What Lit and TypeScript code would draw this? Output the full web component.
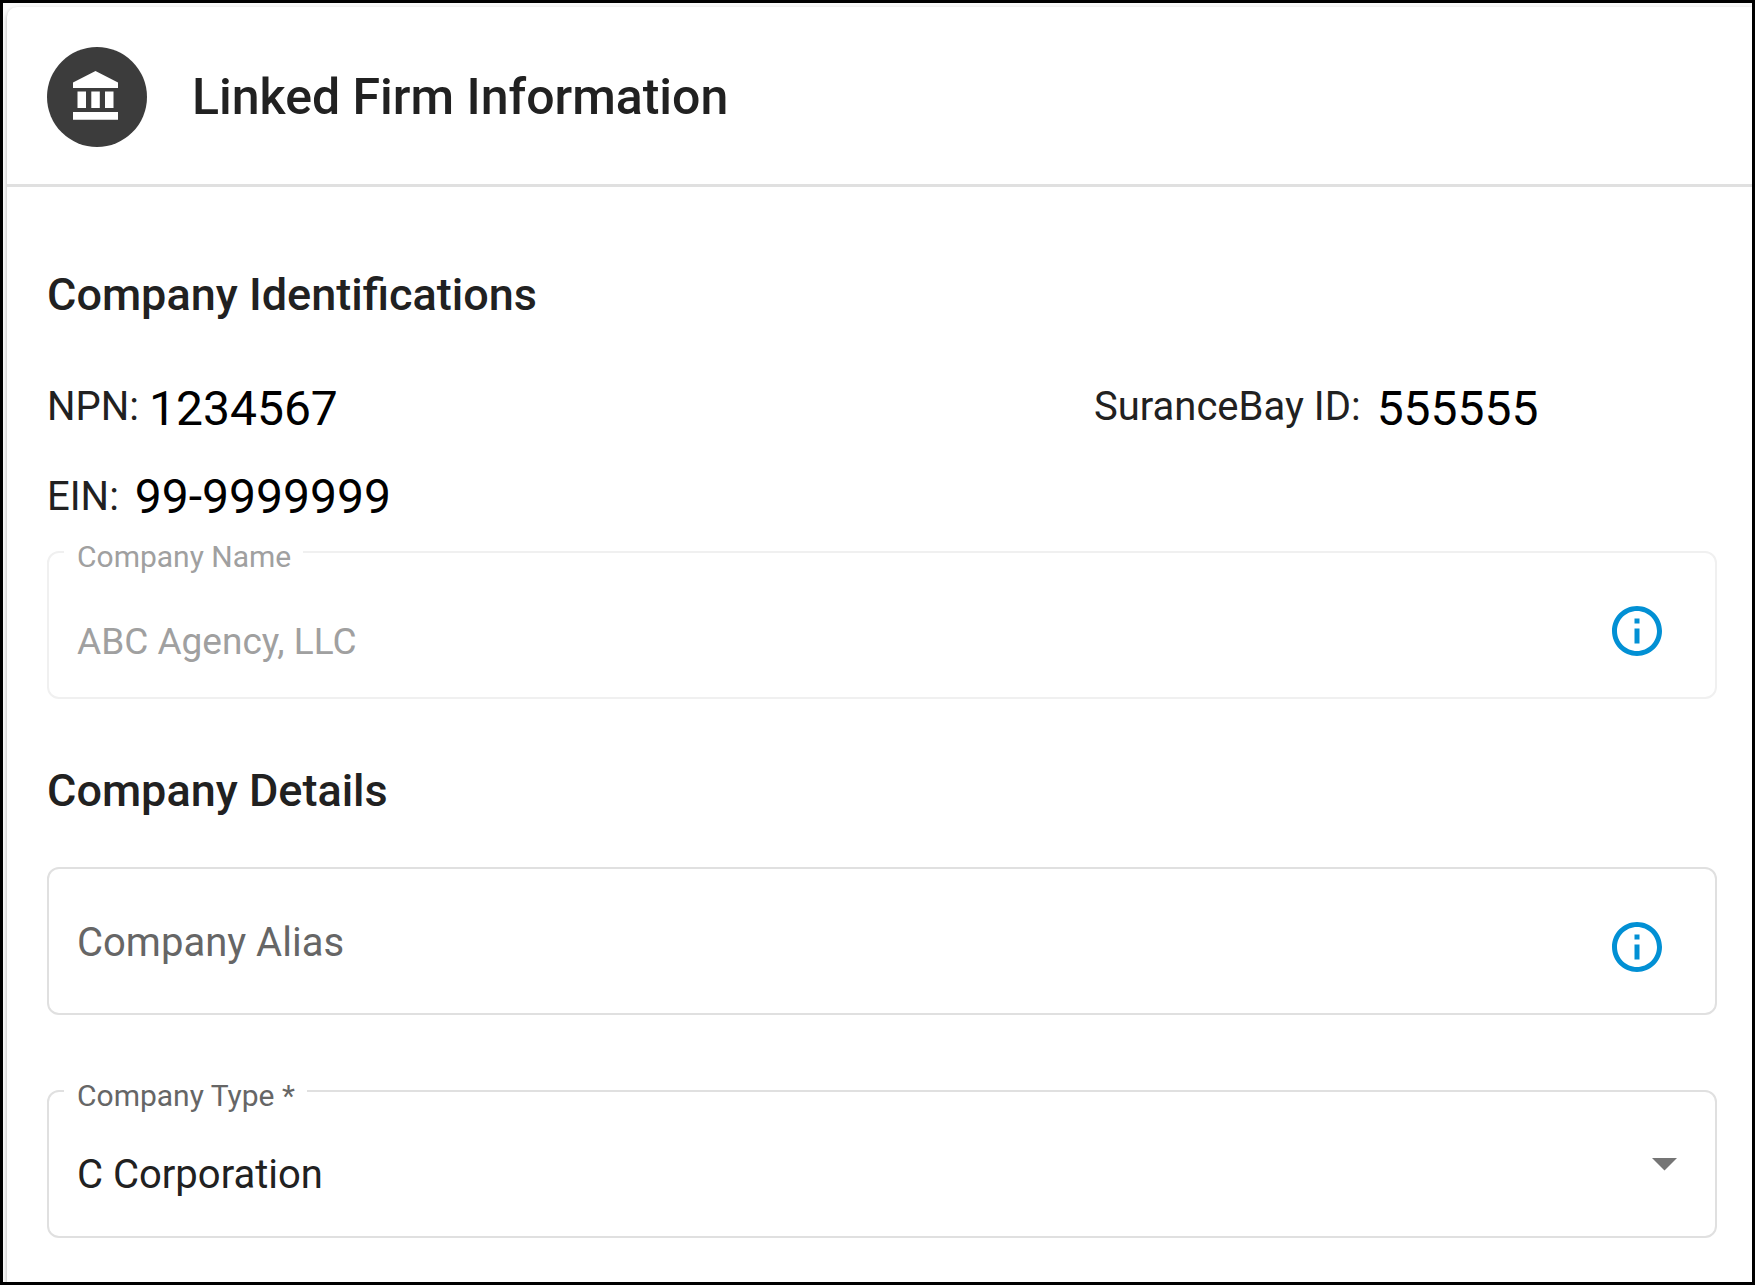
import { LitElement, html, css } from "lit";
import { customElement, property } from "lit/decorators.js";

@customElement("info-button")
class InfoButton extends LitElement {
  @property() topic = "";

  static styles = css`
    :host {
      display: flex;
    }
    .button {
      display: flex;
      padding: 0;
      border: 0;
      background: none;
      color: #0290d4;
      cursor: pointer;
    }
    .icon {
      display: block;
      width: 60px;
      height: 60px;
      fill: currentColor;
    }
  `;

  render() {
    return html`
      <button class="button" type="button" aria-label="About ${this.topic}">
        <svg class="icon" viewBox="0 0 24 24" aria-hidden="true">
          <path
            d="M11 7h2v2h-2zm0 4h2v6h-2zm1-9C6.48 2 2 6.48 2 12s4.480 10 10 10 10-4.480 10-10S17.520 2 12 2zm0 18c-4.410 0-8-3.590-8-8s3.590-8 8-8 8 3.590 8 8-3.590 8-8 8z"
          />
        </svg>
      </button>
    `;
  }
}

@customElement("app-root")
class AppRoot extends LitElement {
  static styles = css`
    :host {
      display: block;
      font-family: Roboto, "Liberation Sans", sans-serif;
      color: #212121;
    }
    * {
      box-sizing: border-box;
    }
    .page {
      display: flex;
      min-height: 100vh;
      padding: 4px 0 0 4px;
      border: 3px solid #000;
      background: #fafafa;
      overflow: hidden;
    }
    .card {
      flex: 1;
      min-width: 0;
      border-top-left-radius: 10px;
      background: #fff;
      box-shadow: 0 2px 4px rgba(0, 0, 0, 0.3);
    }
    .header {
      display: flex;
      align-items: center;
      gap: 45px;
      padding: 40px 40px 37px;
      border-bottom: 3px solid #e0e0e0;
    }
    .avatar {
      display: block;
      flex: none;
      width: 100px;
      height: 100px;
    }
    .title {
      margin: 0;
      font-size: 50px;
      font-weight: 500;
      line-height: 60px;
    }
    .body {
      padding: 80px 35px 40px 40px;
    }
    .heading {
      margin: 0;
      font-size: 45px;
      font-weight: 500;
      line-height: 56px;
    }
    .ids {
      display: grid;
      grid-template-columns: 1047fr 623fr;
      row-gap: 32px;
      margin: 56px 0 26px;
    }
    .id {
      display: flex;
      align-items: flex-start;
      gap: 10px;
    }
    .wide {
      gap: 16px;
    }
    .term {
      font-size: 40px;
      line-height: 56px;
    }
    .value {
      margin: 0;
      padding-top: 2px;
      font-size: 48px;
      line-height: 56px;
      color: #000;
    }
    .level .value {
      padding-top: 0;
    }
    .field {
      position: relative;
      display: flex;
      align-items: center;
      height: 148px;
      border: 2px solid #e0e0e0;
      border-radius: 12px;
    }
    .field.disabled {
      border-color: #f0f0f0;
    }
    .label {
      position: absolute;
      top: -14px;
      left: 15px;
      padding: 0 12px 0 13px;
      background: #fff;
      font-size: 30px;
      line-height: 36px;
      color: #666;
    }
    .disabled .label {
      color: #a0a0a0;
    }
    .label.resting {
      top: 46px;
      background: none;
      font-size: 40px;
      line-height: 56px;
      pointer-events: none;
    }
    .control {
      flex: 1;
      min-width: 0;
      align-self: stretch;
      margin: 0;
      padding: 20px 28px 0;
      border: 0;
      outline: 0;
      border-radius: 10px;
      background: none;
      appearance: none;
      font-family: inherit;
      font-size: 40px;
      color: #212121;
    }
    .disabled .control {
      padding-top: 32px;
      font-size: 37px;
      color: #a0a0a0;
    }
    .info {
      margin: 12px 48px 0 0;
    }
    .arrow {
      position: absolute;
      right: 38px;
      width: 25px;
      height: 13px;
      fill: #757575;
      pointer-events: none;
    }
    .details {
      margin-top: 64px;
    }
    .alias {
      margin-top: 48px;
    }
    .type {
      margin-top: 75px;
    }
  `;

  render() {
    return html`
      <main class="page">
        <section class="card">
          <header class="header">
            <svg class="avatar" viewBox="0 0 100 100" aria-hidden="true">
              <circle cx="50" cy="50" r="50" fill="#3c3c3c" />
              <path
                fill="#fff"
                d="M48.500 24 71 35.500V41H26v-5.500zM30.500 44.500h8.500v16.500H30.500zM44.300 44.500h8.500v16.500h-8.500zM58 44.500h8.500v16.500H58zM26 65h45v7.800H26z"
              />
            </svg>
            <h1 class="title">Linked Firm Information</h1>
          </header>

          <form class="body">
            <h2 class="heading">Company Identifications</h2>
            <dl class="ids">
              <div class="id">
                <dt class="term">NPN:</dt>
                <dd class="value">1234567</dd>
              </div>
              <div class="id wide">
                <dt class="term">SuranceBay ID:</dt>
                <dd class="value">555555</dd>
              </div>
              <div class="id wide level">
                <dt class="term">EIN:</dt>
                <dd class="value">99-9999999</dd>
              </div>
            </dl>

            <div class="field disabled">
              <label class="label" for="name">Company Name</label>
              <input class="control" id="name" value="ABC Agency, LLC" disabled />
              <info-button class="info" topic="Company Name"></info-button>
            </div>

            <h2 class="heading details">Company Details</h2>
            <div class="field alias">
              <label class="label resting" for="alias">Company Alias</label>
              <input class="control" id="alias" />
              <info-button class="info" topic="Company Alias"></info-button>
            </div>

            <div class="field type">
              <label class="label" for="type">Company Type *</label>
              <select class="control" id="type" required>
                <option selected>C Corporation</option>
              </select>
              <svg class="arrow" viewBox="0 0 25 13" aria-hidden="true">
                <path d="M0 0h25L12.500 12.500z" />
              </svg>
            </div>
          </form>
        </section>
      </main>
    `;
  }
}
